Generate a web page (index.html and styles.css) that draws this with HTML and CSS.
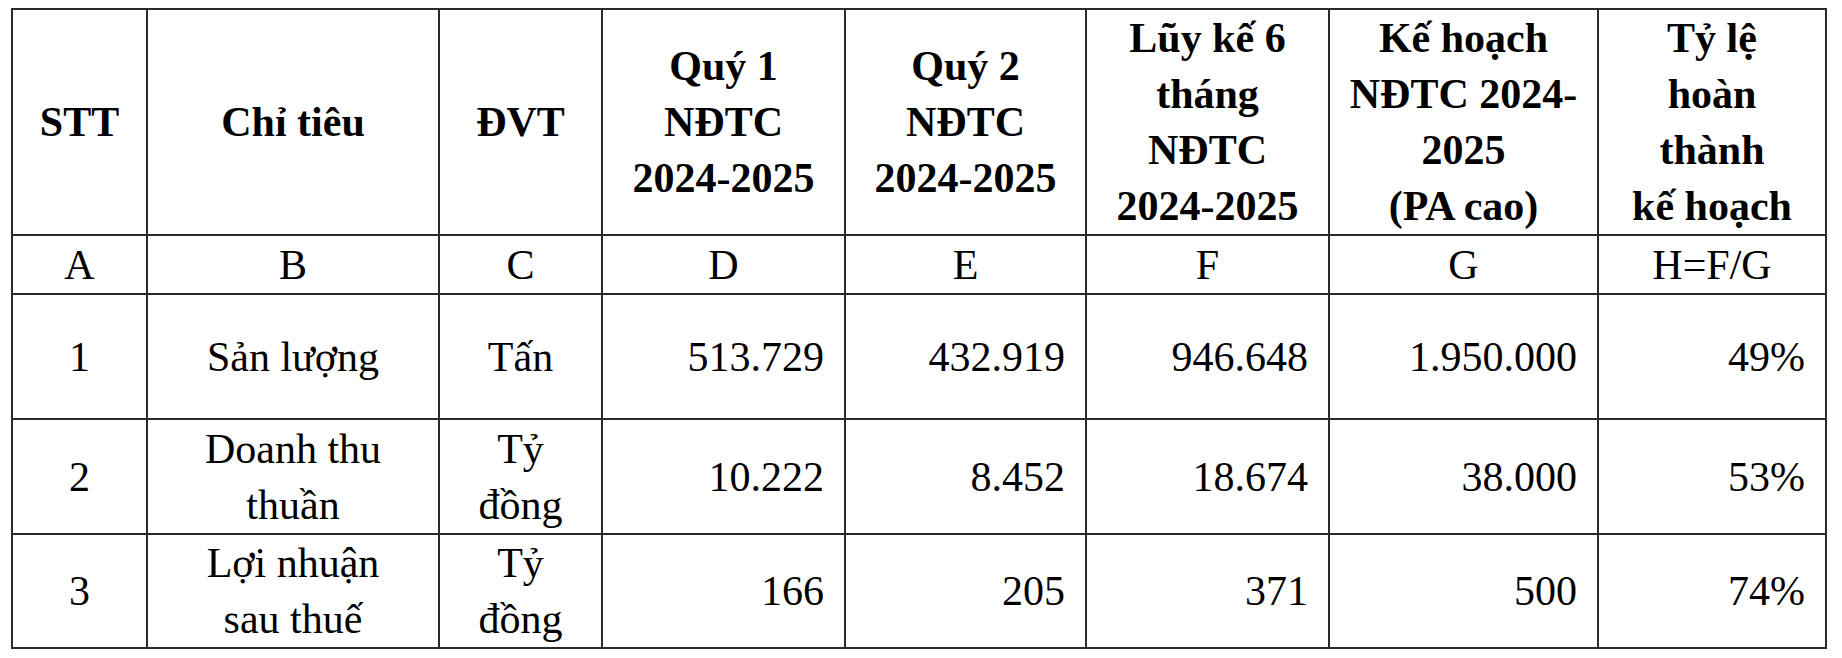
FILE: index.html
```html
<!DOCTYPE html>
<html lang="vi">
<head>
<meta charset="utf-8">
<title>Bảng kết quả</title>
<link rel="stylesheet" href="styles.css">
</head>
<body>
<table class="report">
  <colgroup>
    <col class="c-stt">
    <col class="c-name">
    <col class="c-unit">
    <col class="c-q1">
    <col class="c-q2">
    <col class="c-acc">
    <col class="c-plan">
    <col class="c-rate">
  </colgroup>
  <thead>
    <tr class="head">
      <th>STT</th>
      <th>Chỉ tiêu</th>
      <th>ĐVT</th>
      <th>Quý 1<br>NĐTC<br>2024-2025</th>
      <th>Quý 2<br>NĐTC<br>2024-2025</th>
      <th>Lũy kế 6<br>tháng<br>NĐTC<br>2024-2025</th>
      <th>Kế hoạch<br>NĐTC 2024-<br>2025<br>(PA cao)</th>
      <th>Tỷ lệ<br>hoàn<br>thành<br>kế hoạch</th>
    </tr>
    <tr class="letters">
      <td>A</td><td>B</td><td>C</td><td>D</td><td>E</td><td>F</td><td>G</td><td>H=F/G</td>
    </tr>
  </thead>
  <tbody>
    <tr class="r1">
      <td class="ctr">1</td>
      <td class="ctr">Sản lượng</td>
      <td class="ctr">Tấn</td>
      <td class="num">513.729</td>
      <td class="num">432.919</td>
      <td class="num">946.648</td>
      <td class="num">1.950.000</td>
      <td class="num">49%</td>
    </tr>
    <tr class="r2">
      <td class="ctr">2</td>
      <td class="ctr">Doanh thu<br>thuần</td>
      <td class="ctr">Tỷ<br>đồng</td>
      <td class="num">10.222</td>
      <td class="num">8.452</td>
      <td class="num">18.674</td>
      <td class="num">38.000</td>
      <td class="num">53%</td>
    </tr>
    <tr class="r3">
      <td class="ctr">3</td>
      <td class="ctr">Lợi nhuận<br>sau thuế</td>
      <td class="ctr">Tỷ<br>đồng</td>
      <td class="num">166</td>
      <td class="num">205</td>
      <td class="num">371</td>
      <td class="num">500</td>
      <td class="num">74%</td>
    </tr>
  </tbody>
</table>
</body>
</html>
```
FILE: styles.css
```css
html, body {
  margin: 0;
  padding: 0;
  background: #ffffff;
}

body {
  padding: 8px 0 0 11px;
}

.report {
  border-collapse: collapse;
  table-layout: fixed;
  width: 1816px;
  font-family: "Liberation Serif", "Times New Roman", serif;
  font-size: 42px;
  line-height: 56px;
  color: #000;
}

.c-stt { width: 135px; }
.c-name { width: 292px; }
.c-unit { width: 163px; }
.c-q1 { width: 243px; }
.c-q2 { width: 241px; }
.c-acc { width: 243px; }
.c-plan { width: 269px; }
.c-rate { width: 228px; }

.report th,
.report td {
  border: 2px solid #2a2a2a;
  padding: 0;
  vertical-align: middle;
  text-align: center;
}

.report th {
  font-weight: bold;
}

.head { height: 226px; }
.letters { height: 59px; }
.r1 { height: 125px; }
.r2 { height: 115px; }
.r3 { height: 112px; }

.report td.num {
  text-align: right;
  padding-right: 20px;
}
```
